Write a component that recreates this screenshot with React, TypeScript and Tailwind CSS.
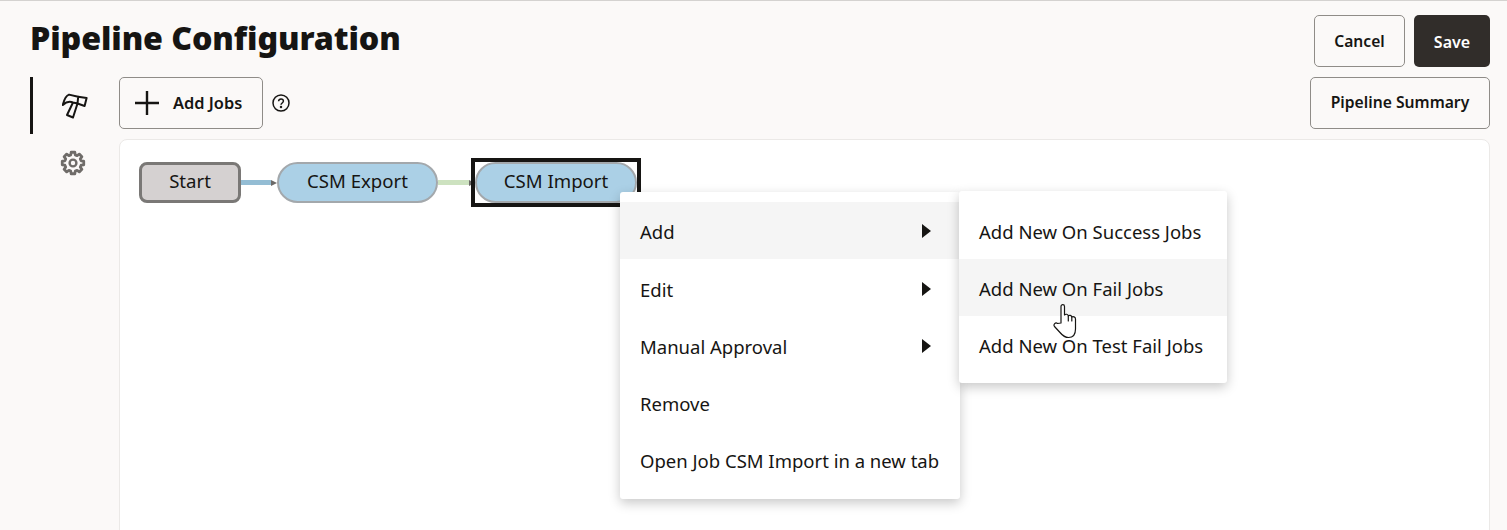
import React from "react";

const font = "font-['Noto_Sans',sans-serif]";

const MenuRow = ({ label, active, arrow, lower }: { label: string; active?: boolean; arrow?: boolean; lower?: boolean }) => (
  <div className={`h-[57px] flex items-center justify-between pl-[20px] pr-[29px] ${active ? "bg-[#f5f5f5]" : ""} ${lower ? "pt-[2px]" : ""}`}>
    <span className="whitespace-nowrap pt-[3px]">{label}</span>
    {arrow && <span className="w-0 h-0 border-y-[7px] border-y-transparent border-l-[9px] border-l-[#161513]" />}
  </div>
);

const Hammer = () => (
  <svg width="26" height="26" viewBox="0 0 26 26" fill="none" stroke="#161513" strokeWidth="2" strokeLinejoin="round">
    <path d="M0.8 12 C2 7 4 2.5 7 1.6 L16.2 3.7 L15.5 10.5 L11 9.5 C7 7.8 4 9 0.8 12 Z" />
    <path d="M16.2 3.7 L24.6 5 L22.6 13 L15.5 10.5" />
    <path d="M11 9.5 L5 22 L11 24.5 L15.5 10.5" />
  </svg>
);

// 8 tooth cog outline
const gearPath = () => {
  const pts: string[] = [];
  for (let i = 0; i < 8; i++) {
    const a = (i * Math.PI) / 4 - Math.PI / 2;
    const steps: [number, number][] = [
      [8.4, -0.27],
      [10.9, -0.17],
      [10.9, 0.17],
      [8.4, 0.27],
    ];
    steps.forEach(([r, d]) => {
      pts.push(`${(13 + r * Math.cos(a + d)).toFixed(2)} ${(13 + r * Math.sin(a + d)).toFixed(2)}`);
    });
  }
  return "M" + pts.join("L") + "Z";
};

const Gear = () => (
  <svg width="26" height="26" viewBox="0 0 26 26" fill="none" stroke="#6f6c69" strokeWidth="2.8" strokeLinejoin="round">
    <path d={gearPath()} />
    <circle cx="13" cy="13" r="3.4" strokeWidth="2.4" />
  </svg>
);

const Hand = () => (
  <svg width="26" height="36" viewBox="0 0 26 36" fill="#fff" stroke="#161513" strokeWidth="1.2" strokeLinejoin="round" strokeLinecap="round">
    <path d="M8 20 L8 3.5 C8 1 11.5 1 11.5 3.5 L11.5 12 C12.5 10.8 15 11 15.3 12.8 C16.5 11.8 18.5 12.3 18.8 14 C20 13.3 22.5 13.8 22.5 16 L22.5 26 C22.5 31 20 34.5 15.5 34.5 C11.5 34.5 9.5 32.5 7 29.5 L1.5 23.5 C0 21.5 2.5 19 4.5 20.5 Z" />
    <path d="M15.3 12.8 L15.3 18 M18.8 14 L18.8 18" fill="none" />
  </svg>
);

const Connector = ({ color, width }: { color: string; width: string }) => (
  <div className={`${width} flex items-center`}>
    <div className={`flex-1 h-[5px] ${color}`} />
    <div className="w-0 h-0 border-y-[3px] border-y-transparent border-l-[6px] border-l-[#6c6a68]" />
  </div>
);

export default function App() {
  return (
    <div className={`relative h-[530px] w-[1507px] overflow-hidden bg-[#fbf9f8] border-t border-[#d4d2d0] text-[#161513] ${font}`}>
      <div className="flex items-start justify-between pl-[30px] pr-[17px] pt-[14px] h-[76px]">
        <h1 className="text-[32.2px] leading-[46px] font-black tracking-[-0.1px] text-[#161513]">Pipeline Configuration</h1>
        <div className="flex gap-[9px]">
          <button className="w-[91px] h-[52px] pt-[1px] rounded-[5px] border border-[#8f8c88] text-[15.6px] font-semibold">Cancel</button>
          <button className="w-[76px] h-[52px] pt-[1px] rounded-[5px] bg-[#312d2a] text-white text-[16px] font-semibold">Save</button>
        </div>
      </div>

      <div className="flex pl-[30px] pr-[17px]">
        <div className="w-[89px] shrink-0">
          <div className="h-[57px] border-l-[3px] border-[#161513] flex items-center justify-center pr-[3px]">
            <Hammer />
          </div>
          <div className="h-[57px] flex items-center justify-center pr-[3px]">
            <Gear />
          </div>
        </div>

        <div className="flex-1 flex flex-col gap-[10px]">
          <div className="flex items-center justify-between">
            <div className="flex items-center gap-[9px]">
              <button className="w-[144px] h-[52px] rounded-[5px] border border-[#8f8c88] flex items-center pl-[14px] text-[16.4px] font-semibold">
                <svg width="26" height="26" viewBox="0 0 26 26" stroke="#161513" strokeWidth="2.4" className="mr-[13px]">
                  <path d="M13 1v24M1 13h24" />
                </svg>
                Add Jobs
              </button>
              <svg width="18" height="18" viewBox="0 0 18 18" fill="none" stroke="#161513" strokeWidth="1.5">
                <circle cx="9" cy="9" r="8" />
                <path d="M6.6 7.2C6.6 5.8 7.7 4.9 9 4.9s2.4.9 2.4 2.2c0 1.9-2.4 1.9-2.4 3.7" />
                <circle cx="9" cy="13" r=".5" />
              </svg>
            </div>
            <button className="w-[180px] h-[52px] rounded-[5px] border border-[#8f8c88] text-[15.7px] font-semibold">Pipeline Summary</button>
          </div>

          <div className="h-[400px] bg-white border border-[#ebe9e7] rounded-[8px] pl-[19px] pt-[22px] text-[18.6px]">
            <div className="flex items-center h-[41px]">
              <div className="w-[102px] h-[41px] pb-[4px] rounded-[8px] border-[3px] border-[#7a7876] bg-[#d5d1d1] flex items-center justify-center">Start</div>
              <Connector color="bg-[#94bdd4]" width="w-[36px]" />
              <div className="w-[161px] h-[41px] pb-[4px] rounded-full border-[2px] border-[#a3a8ac] bg-[#abd0e6] flex items-center justify-center">CSM Export</div>
              <Connector color="bg-[#cde2c0]" width="w-[37px]" />
              <div className="outline-[4px] outline-[#161513]">
                <div className="w-[162px] h-[41px] pb-[4px] rounded-full border-[2px] border-[#a3a8ac] bg-[#abd0e6] flex items-center justify-center">CSM Import</div>
              </div>
            </div>
          </div>
        </div>
      </div>

      <div className="absolute left-[620px] top-[191px] w-[340px] h-[307px] pt-[10px] bg-white rounded-[3px] shadow-[0_4px_12px_rgba(0,0,0,0.22)] text-[18.5px]">
        <MenuRow label="Add" active arrow />
        <MenuRow label="Edit" arrow lower />
        <MenuRow label="Manual Approval" arrow lower />
        <MenuRow label="Remove" lower />
        <MenuRow label="Open Job CSM Import in a new tab" lower />
      </div>

      <div className="absolute left-[959px] top-[190px] w-[268px] h-[192px] pt-[11px] bg-white rounded-[3px] shadow-[0_4px_12px_rgba(0,0,0,0.22)] text-[18.5px]">
        <MenuRow label="Add New On Success Jobs" />
        <MenuRow label="Add New On Fail Jobs" active />
        <MenuRow label="Add New On Test Fail Jobs" />
      </div>

      <div className="absolute left-[1053px] top-[302px]">
        <Hand />
      </div>
    </div>
  );
}
